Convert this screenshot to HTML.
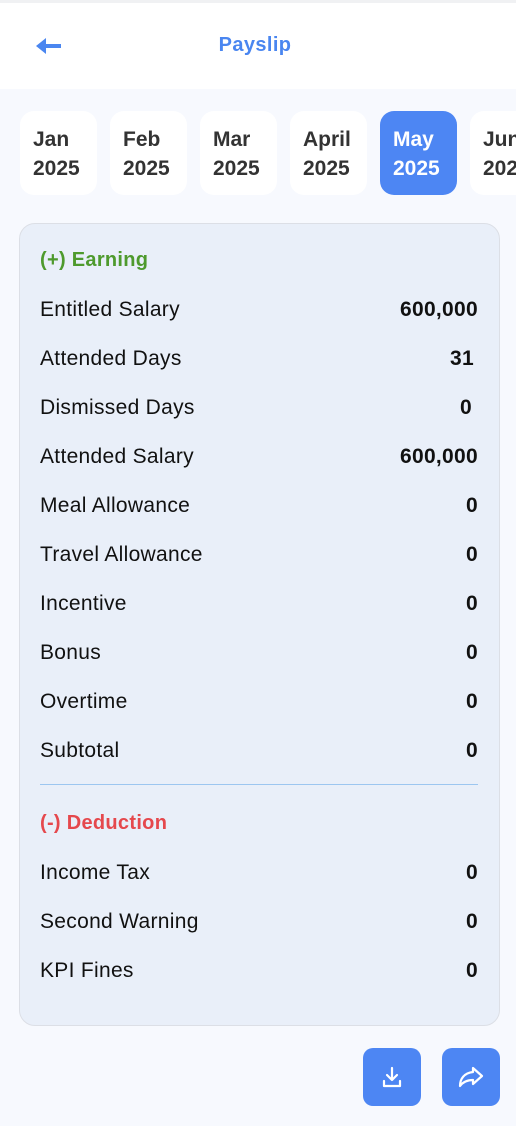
<!DOCTYPE html>
<html><head><meta charset="utf-8"><style>
*{margin:0;padding:0;box-sizing:border-box}
body{width:516px;height:1126px;background:#f7f9fe;font-family:"Liberation Sans",sans-serif;position:relative;overflow:hidden;color:#111}
.top{position:absolute;left:0;top:0;width:516px;height:3px;background:#f0f1f3}
.hdr{position:absolute;left:0;top:3px;width:516px;height:86px;background:#fff}
.title{position:absolute;left:0;width:516px;top:34px;text-align:center;color:#4a86f0;font-weight:bold;font-size:20px;letter-spacing:0.4px;padding-right:6px}
.chip{position:absolute;top:111px;width:77px;height:84px;background:#fff;border-radius:14px;font-size:21px;font-weight:bold;color:#333;padding:14px 0 0 13px;line-height:29px}
.chip.on{background:#4d86f3;color:#fff}
.card{position:absolute;left:19px;top:223px;width:481px;height:803px;background:#e9eff9;border:1px solid #dcdfe6;border-radius:16px}
.row{position:absolute;left:40px;width:438px;font-size:21px;letter-spacing:0.3px;display:flex;justify-content:space-between;line-height:24px}
.row b{font-weight:bold}
.h{font-weight:bold;font-size:20px}
.div{position:absolute;left:40px;top:784px;width:438px;height:1px;background:#9cc6f0}
.btn{position:absolute;top:1048px;width:58px;height:58px;background:#4d86f3;border-radius:10px;display:flex;align-items:center;justify-content:center}
</style></head><body>
<div class="top"></div>
<div class="hdr"></div>
<svg style="position:absolute;left:36px;top:37px" width="26" height="18" viewBox="0 0 26 18"><path d="M8 9H25" stroke="#4a86f0" stroke-width="4" fill="none"/><path d="M0 9L10 1V17Z" fill="#4a86f0"/></svg>
<div class="title">Payslip</div>
<div class="chip" style="left:20px">Jan<br>2025</div>
<div class="chip" style="left:110px">Feb<br>2025</div>
<div class="chip" style="left:200px">Mar<br>2025</div>
<div class="chip" style="left:290px">April<br>2025</div>
<div class="chip on" style="left:380px">May<br>2025</div>
<div class="chip" style="left:470px">June<br>2025</div>
<div class="card"></div>
<div class="row h" style="top:248px;color:#4e9a2d">(+) Earning</div>
<div class="row" style="top:298px"><span>Entitled Salary</span><b>600,000</b></div>
<div class="row" style="top:347px"><span>Attended Days</span><b style="margin-right:4px">31</b></div>
<div class="row" style="top:396px"><span>Dismissed Days</span><b style="margin-right:6px">0</b></div>
<div class="row" style="top:445px"><span>Attended Salary</span><b>600,000</b></div>
<div class="row" style="top:494px"><span>Meal Allowance</span><b>0</b></div>
<div class="row" style="top:543px"><span>Travel Allowance</span><b>0</b></div>
<div class="row" style="top:592px"><span>Incentive</span><b>0</b></div>
<div class="row" style="top:641px"><span>Bonus</span><b>0</b></div>
<div class="row" style="top:690px"><span>Overtime</span><b>0</b></div>
<div class="row" style="top:739px"><span>Subtotal</span><b>0</b></div>
<div class="div"></div>
<div class="row h" style="top:811px;color:#e5484d">(-) Deduction</div>
<div class="row" style="top:861px"><span>Income Tax</span><b>0</b></div>
<div class="row" style="top:910px"><span>Second Warning</span><b>0</b></div>
<div class="row" style="top:959px"><span>KPI Fines</span><b>0</b></div>
<div class="btn" style="left:363px"><svg width="24" height="24" viewBox="0 0 24 24" fill="none" stroke="#fff" stroke-width="2.2" stroke-linecap="round" stroke-linejoin="round"><path d="M12 3V14M7 10L12 15L17 10M4 16V21H20V16"/></svg></div>
<div class="btn" style="left:442px"><svg width="28" height="24" viewBox="0 0 28 24" fill="none" stroke="#fff" stroke-width="2.2" stroke-linejoin="round"><path d="M16 3L25 11L16 19V15C10 15 6 17 3 21C3 14 7 8 16 7Z"/></svg></div>
</body></html>
